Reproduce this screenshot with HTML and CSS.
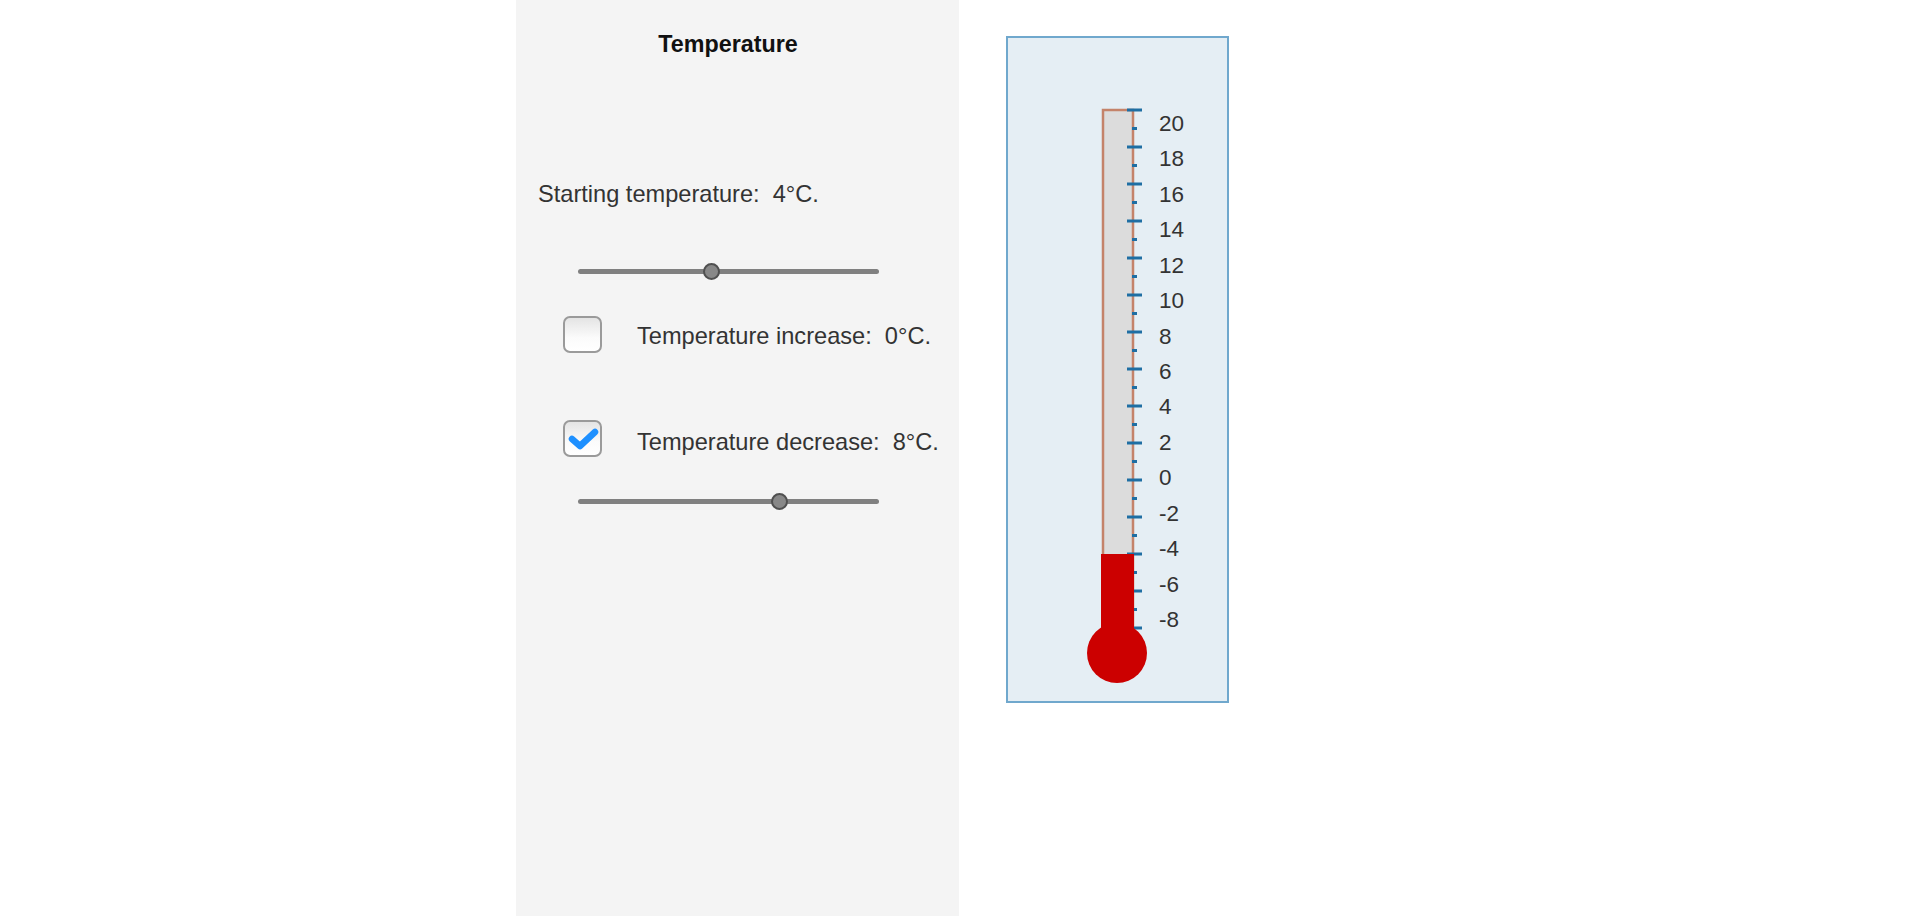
FILE: index.html
```html
<!DOCTYPE html>
<html lang="en">
<head>
    <meta charset="UTF-8">
    <title>Temperature</title>
    <link rel="stylesheet" href="styles.css">
</head>
<body>
    <div class="page">
        <div class="panel">
            <div class="title">Temperature</div>

            <div class="start-label">Starting temperature:&nbsp; 4°C.</div>
            <div class="slider">
                <div class="track"></div>
                <div class="knob" style="left: 44.3%"></div>
            </div>

            <div class="option">
                <span class="check"></span>
                <span class="option-label">Temperature increase:&nbsp; 0°C.</span>
            </div>

            <div class="option option-second">
                <span class="check checked">
                    <svg width="39" height="37" viewBox="0 0 39 37">
                        <path d="M9 19 L17 26 L32 12" fill="none" stroke="#1e90ff" stroke-width="6.5" stroke-linecap="round" stroke-linejoin="round"/>
                    </svg>
                </span>
                <span class="option-label">Temperature decrease:&nbsp; 8°C.</span>
            </div>
            <div class="slider slider-second">
                <div class="track"></div>
                <div class="knob" style="left: 66.7%"></div>
            </div>
        </div>

        <div class="thermo-box">
            <svg id="thermo" width="219" height="663" viewBox="0 0 219 663"></svg>
        </div>
    </div>

    <script>
        const svgNS = 'http://www.w3.org/2000/svg';
        const thermo = document.getElementById('thermo');

        const current = -4;        // starting 4, minus 8
        const zeroY = 442;         // y of the 0 tick
        const perDegree = 18.5;

        function add(tag, attrs, text) {
            const el = document.createElementNS(svgNS, tag);
            for (const k in attrs) el.setAttribute(k, attrs[k]);
            if (text !== undefined) el.textContent = text;
            thermo.appendChild(el);
            return el;
        }

        // glass tube
        add('rect', { x: 95, y: 72, width: 30, height: 560, fill: '#dcdcdc', stroke: '#c4836a', 'stroke-width': 2.5 });

        // scale ticks, 20 down to -9
        for (let v = 20; v >= -9; v--) {
            const y = zeroY - v * perDegree;
            const major = v % 2 === 0;
            add('line', {
                x1: major ? 119 : 124, x2: major ? 134 : 129,
                y1: y, y2: y,
                stroke: '#1f6ea3', 'stroke-width': 3
            });
        }

        // mercury column and bulb
        const columnTop = zeroY - current * perDegree;
        add('rect', { x: 93, y: columnTop, width: 33, height: 615 - columnTop, fill: '#cc0000' });
        add('circle', { cx: 109, cy: 615, r: 30, fill: '#cc0000' });

        // labels
        for (let i = 0; i <= 14; i++) {
            add('text', { x: 151, y: 93 + i * 35.43, class: 'scale-label' }, String(20 - i * 2));
        }
    </script>
</body>
</html>
```

FILE: styles.css
```css
body {
    margin: 0;
    background-color: #ffffff;
    font-family: "Liberation Sans", Arial, sans-serif;
    color: #333;
}
.page {
    display: flex;
    align-items: flex-start;
    padding-left: 516px;
}
.panel {
    width: 443px;
    height: 916px;
    box-sizing: border-box;
    background-color: #f4f4f4;
    padding-top: 31px;
}
.title {
    font-size: 23.3px;
    font-weight: bold;
    line-height: 27px;
    color: #111;
    text-align: center;
    padding-right: 19px;
}
.start-label {
    font-size: 23.6px;
    line-height: 27px;
    margin-top: 123px;
    padding-left: 22px;
}
.slider {
    position: relative;
    width: 301px;
    height: 16px;
    margin-top: 55px;
    margin-left: 62px;
}
.slider-second {
    margin-top: 35px;
}
.track {
    position: absolute;
    left: 0;
    right: 0;
    top: 6px;
    height: 5px;
    border-radius: 3px;
    background-color: #808080;
}
.knob {
    position: absolute;
    top: 0;
    width: 17px;
    height: 17px;
    margin-left: -8px;
    box-sizing: border-box;
    border-radius: 50%;
    border: 2px solid #505050;
    background-color: #888;
}
.option {
    display: flex;
    align-items: flex-start;
    margin-top: 37px;
    margin-left: 47px;
    height: 38px;
}
.option-second {
    margin-top: 66px;
}
.check {
    display: block;
    width: 39px;
    height: 37px;
    box-sizing: border-box;
    border: 2px solid #9a9a9a;
    border-radius: 7px;
    background: linear-gradient(#e4e4e4, #fbfbfb 60%, #ffffff);
    position: relative;
}
.check svg {
    position: absolute;
    left: -2px;
    top: -2px;
}
.option-label {
    font-size: 23.6px;
    line-height: 27px;
    margin-left: 35px;
    margin-top: 7px;
}
.option-second .option-label {
    margin-top: 9px;
}
.thermo-box {
    margin-top: 36px;
    margin-left: 47px;
    width: 223px;
    height: 667px;
    box-sizing: border-box;
    border: 2px solid #70a8cd;
    background-color: #e5eef4;
}
#thermo {
    display: block;
}
.scale-label {
    font-family: "Liberation Sans", Arial, sans-serif;
    font-size: 22.5px;
    fill: #333;
}
```
